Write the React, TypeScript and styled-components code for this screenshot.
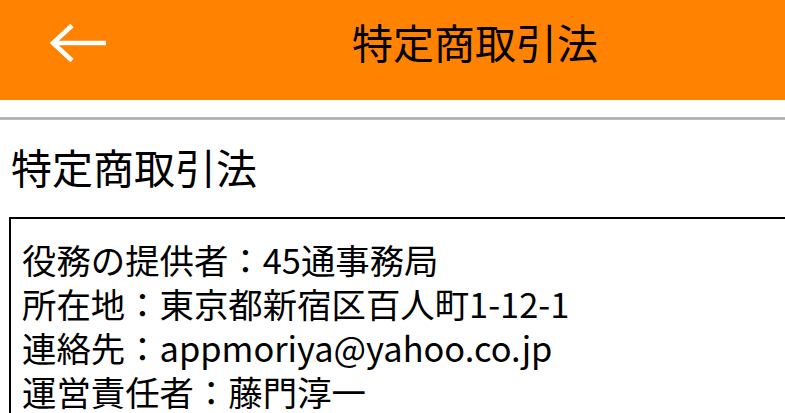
import styled, { createGlobalStyle } from 'styled-components';

const GlobalStyle = createGlobalStyle`
	html, body {
		margin: 0;
		padding: 0;
		background: #ffffff;
		overflow: hidden;
	}
	body {
		font-family: 'Noto Sans CJK JP', 'Noto Sans', sans-serif;
		color: #000000;
	}
`;

const info = [
	'役務の提供者：45通事務局',
	'所在地：東京都新宿区百人町1-12-1',
	'連絡先：appmoriya@yahoo.co.jp',
	'運営責任者：藤門淳一',
];

const BackArrow = () => (
	<svg width='58' height='40' viewBox='0 0 58 40' fill='none'>
		<path
			d='M4 20 H57 M23 2.5 L4 20 L23 37.5'
			stroke='#ffffff'
			strokeWidth='4.6'
			strokeLinejoin='miter'
		/>
	</svg>
);

const App = () => {
	return (
		<Page>
			<GlobalStyle />
			<Header>
				<BackButton aria-label='戻る'>
					<BackArrow />
				</BackButton>
				<HeaderTitle>特定商取引法</HeaderTitle>
			</Header>
			<Divider />
			<Content>
				<SectionTitle>特定商取引法</SectionTitle>
				<InfoBox>
					{info.map((line) => (
						<InfoLine key={line}>{line}</InfoLine>
					))}
				</InfoBox>
			</Content>
		</Page>
	);
};

export default App;

const Page = styled.div`
	width: 950px;
	min-height: 413px;
	background: #ffffff;
`;

const Header = styled.header`
	position: relative;
	height: 100px;
	box-sizing: border-box;
	padding-bottom: 19px;
	background-color: #ff8200;
	display: flex;
	align-items: center;
	justify-content: center;
`;

const BackButton = styled.button`
	position: absolute;
	left: 49px;
	top: 23px;
	padding: 0;
	border: none;
	background: none;
	display: flex;
	cursor: pointer;
`;

const HeaderTitle = styled.h1`
	margin: 0;
	font-size: 41px;
	font-weight: 400;
	line-height: 48px;
	color: #000000;
`;

const Divider = styled.div`
	margin-top: 17px;
	height: 3px;
	background: linear-gradient(#c4c4c4, #a6a6a6 60%, #cfcfcf);
`;

const Content = styled.main`
	padding: 0 9px;
`;

const SectionTitle = styled.h2`
	margin: 22px 0 27px 2px;
	font-size: 41px;
	font-weight: 400;
	line-height: 48px;
`;

const InfoBox = styled.div`
	border: 2px solid #000000;
	padding: 18px 11px 12px;
`;

const InfoLine = styled.p`
	margin: 0;
	font-size: 34.4px;
	line-height: 44px;
	white-space: nowrap;
`;
